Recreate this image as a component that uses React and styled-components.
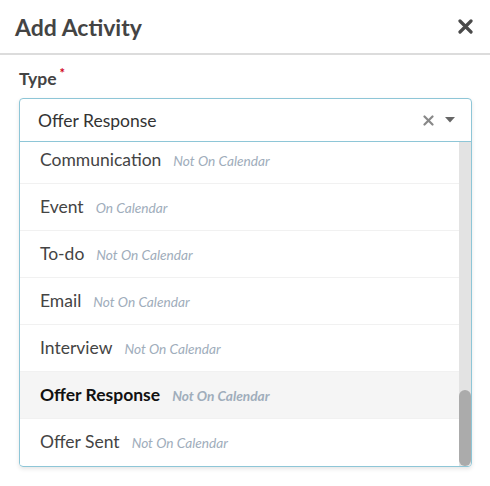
import React from "react";
import styled, { createGlobalStyle } from "styled-components";

const GlobalStyle = createGlobalStyle`
  html, body {
    margin: 0;
    padding: 0;
    background: #fff;
    font-family: Lato, "Open Sans", sans-serif;
  }
`;

const Modal = styled.div`
  width: 490px;
  height: 486px;
  background: #fff;
  overflow: hidden;
`;

const Header = styled.header`
  display: flex;
  justify-content: space-between;
  align-items: center;
  height: 53px;
  padding: 0 17px 0 15px;
  border-bottom: 2px solid #dcdcdc;
`;

const Title = styled.h2`
  margin: 0;
  font-size: 23px;
  font-weight: 700;
  color: #444;
`;

const CloseButton = styled.button`
  display: flex;
  align-items: center;
  justify-content: center;
  padding: 0;
  border: none;
  background: none;
  color: #4a4a4a;
  cursor: pointer;
`;

const Body = styled.div`
  padding: 13px 18px 0 19px;
`;

const Label = styled.label`
  display: block;
  font-size: 17.5px;
  font-weight: 700;
  color: #444;
  margin-bottom: 9px;
`;

const Required = styled.sup`
  color: #d0021b;
  font-size: 13px;
  margin-left: 3px;
  vertical-align: 7px;
  line-height: 0;
`;

const Select = styled.div`
  border: 1px solid #8ec6d7;
  border-radius: 4px;
  box-shadow: 0 2px 4px rgba(0, 0, 0, 0.1);
  overflow: hidden;
`;

const Control = styled.div`
  display: flex;
  align-items: center;
  height: 42px;
  padding: 0 16px 0 18px;
  border-bottom: 1px solid #8ec6d7;
`;

const Value = styled.span`
  flex: 1;
  font-size: 17.5px;
  color: #333;
`;

const Indicators = styled.div`
  display: flex;
  align-items: center;
  gap: 11px;
  color: #888;
`;

const Menu = styled.div`
  display: flex;
  height: 324px;
`;

const List = styled.ul`
  flex: 1;
  margin: 0;
  padding: 0;
  list-style: none;
  overflow: hidden;
`;

const ScrollTrack = styled.div`
  display: flex;
  flex-direction: column;
  justify-content: flex-end;
  width: 12px;
  background: #e3e3e3;
`;

const ScrollThumb = styled.div`
  height: 76px;
  border-radius: 6px;
  background: #ababab;
`;

const Option = styled.li`
  display: flex;
  align-items: baseline;
  height: 46px;
  line-height: 46px;
  padding: 0 20px;
  border-top: 1px solid #f1f1f1;
  background: ${(p) => (p.$active ? "#f5f5f5" : "#fff")};
  font-size: 17.5px;
  font-weight: ${(p) => (p.$active ? 700 : 400)};
  color: ${(p) => (p.$active ? "#111" : "#444")};
  white-space: nowrap;
`;

const Tag = styled.span`
  margin-left: 12px;
  font-size: 13.7px;
  font-style: italic;
  color: #a0adbb;
`;

const hidden = [
  "Call", "Meeting", "Note", "Task", "Lunch", "Phone Screen", "Referral",
  "Reference Check", "Follow Up", "Deadline", "Reminder", "Video Call",
  "Onsite", "Assessment", "Feedback", "Debrief", "Background Check",
  "Application", "Screening", "Message", "Sourcing", "Intro", "Coffee Chat",
];

const options = [
  ...hidden.map((name) => ({ name, tag: "Not On Calendar" })),
  { name: "Communication", tag: "Not On Calendar" },
  { name: "Event", tag: "On Calendar" },
  { name: "To-do", tag: "Not On Calendar" },
  { name: "Email", tag: "Not On Calendar" },
  { name: "Interview", tag: "Not On Calendar" },
  { name: "Offer Response", tag: "Not On Calendar" },
  { name: "Offer Sent", tag: "Not On Calendar" },
];

const App = () => {
  const listRef = React.useRef(null);
  const selected = "Offer Response";

  React.useLayoutEffect(() => {
    if (listRef.current) {
      listRef.current.scrollTop = listRef.current.scrollHeight;
    }
  }, []);

  return (
    <>
      <GlobalStyle />
      <Modal>
        <Header>
          <Title>Add Activity</Title>
          <CloseButton aria-label="Close">
            <svg width="15" height="15" viewBox="0 0 15 15">
              <path d="M2 2 L13 13 M13 2 L2 13" stroke="currentColor" strokeWidth="3.2" strokeLinecap="round" />
            </svg>
          </CloseButton>
        </Header>
        <Body>
          <Label>
            Type<Required>*</Required>
          </Label>
          <Select>
            <Control>
              <Value>{selected}</Value>
              <Indicators>
                <svg width="11" height="11" viewBox="0 0 11 11">
                  <path d="M1.5 1.5 L9.5 9.5 M9.5 1.5 L1.5 9.5" stroke="currentColor" strokeWidth="2.2" strokeLinecap="round" />
                </svg>
                <svg width="10" height="6" viewBox="0 0 10 6">
                  <path d="M0 0 H10 L5 5.5 Z" fill="#666" />
                </svg>
              </Indicators>
            </Control>
            <Menu>
              <List ref={listRef}>
                {options.map((o) => (
                  <Option key={o.name} $active={o.name === selected}>
                    {o.name}
                    <Tag>{o.tag}</Tag>
                  </Option>
                ))}
              </List>
              <ScrollTrack>
                <ScrollThumb />
              </ScrollTrack>
            </Menu>
          </Select>
        </Body>
      </Modal>
    </>
  );
};

export default App;
